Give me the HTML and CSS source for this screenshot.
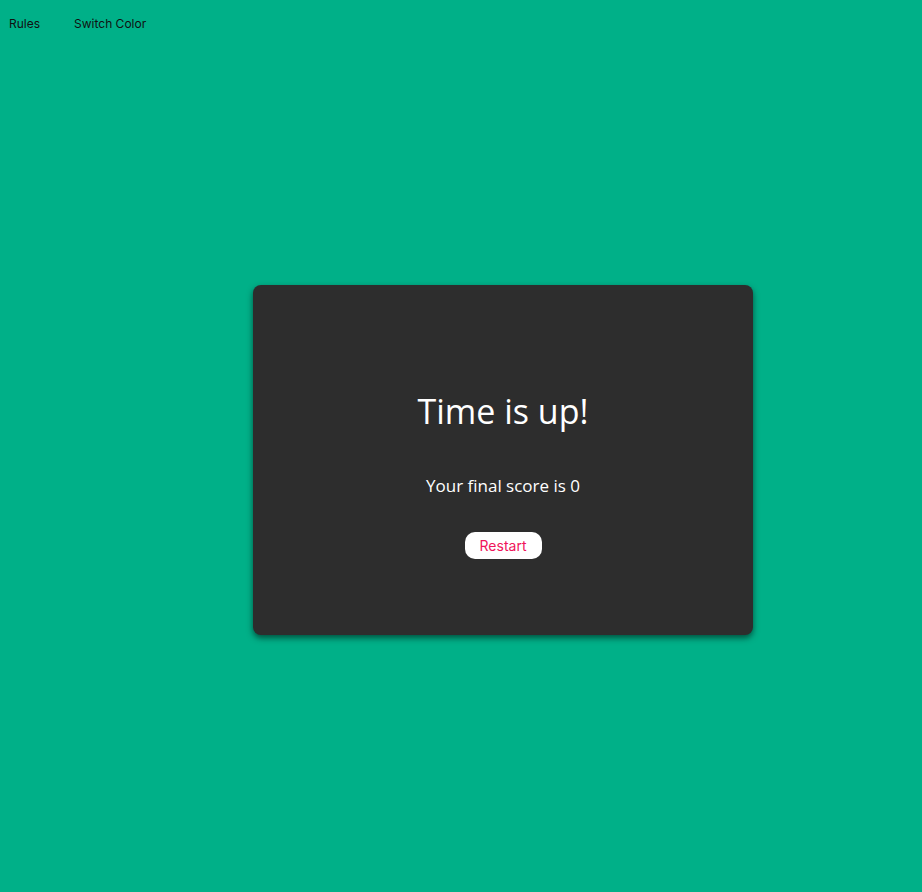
FILE: index.html
```html
<!DOCTYPE html>
<html>
<head>
<meta charset="utf-8">
<link rel="stylesheet" href="styles.css">
</head>
<body>
<nav class="nav">
  <a class="nav-link">Rules</a>
  <a class="nav-link">Switch Color</a>
</nav>
<main class="stage">
  <section class="card">
    <h1 class="title">Time is up!</h1>
    <p class="score">Your final score is 0</p>
    <button class="restart">Restart</button>
  </section>
</main>
</body>
</html>
```
FILE: styles.css
```css
html, body {
  margin: 0;
  padding: 0;
  height: 100%;
}
body {
  background: #00b088;
  font-family: "Inter", "Roboto", sans-serif;
}
.nav {
  display: flex;
  gap: 34px;
  padding: 16px 9px 0;
  height: 30px;
  box-sizing: border-box;
}
.nav-link {
  font-size: 12px;
  color: #111;
  line-height: 15px;
}
.stage {
  display: flex;
  justify-content: center;
  padding-top: 255px;
  padding-left: 84px;
}
.card {
  width: 500px;
  height: 350px;
  background: #2d2d2d;
  border-radius: 8px;
  box-shadow: 0 3px 6px rgba(0,0,0,0.55);
  display: flex;
  flex-direction: column;
  align-items: center;
  box-sizing: border-box;
  padding-top: 106px;
}
.title {
  margin: 0;
  font-family: "Open Sans", "DejaVu Sans", sans-serif;
  font-weight: 400;
  font-size: 34px;
  line-height: 40px;
  color: #fff;
}
.score {
  margin: 44px 0 0;
  font-family: "Open Sans", sans-serif;
  font-size: 17px;
  line-height: 22px;
  color: #fff;
}
.restart {
  margin-top: 35px;
  border: none;
  background: #fff;
  color: #f0145a;
  border-radius: 10px;
  width: 77px;
  height: 27px;
  font-family: "Inter", "Roboto", sans-serif;
  font-size: 14px;
  padding: 0;
}
```
